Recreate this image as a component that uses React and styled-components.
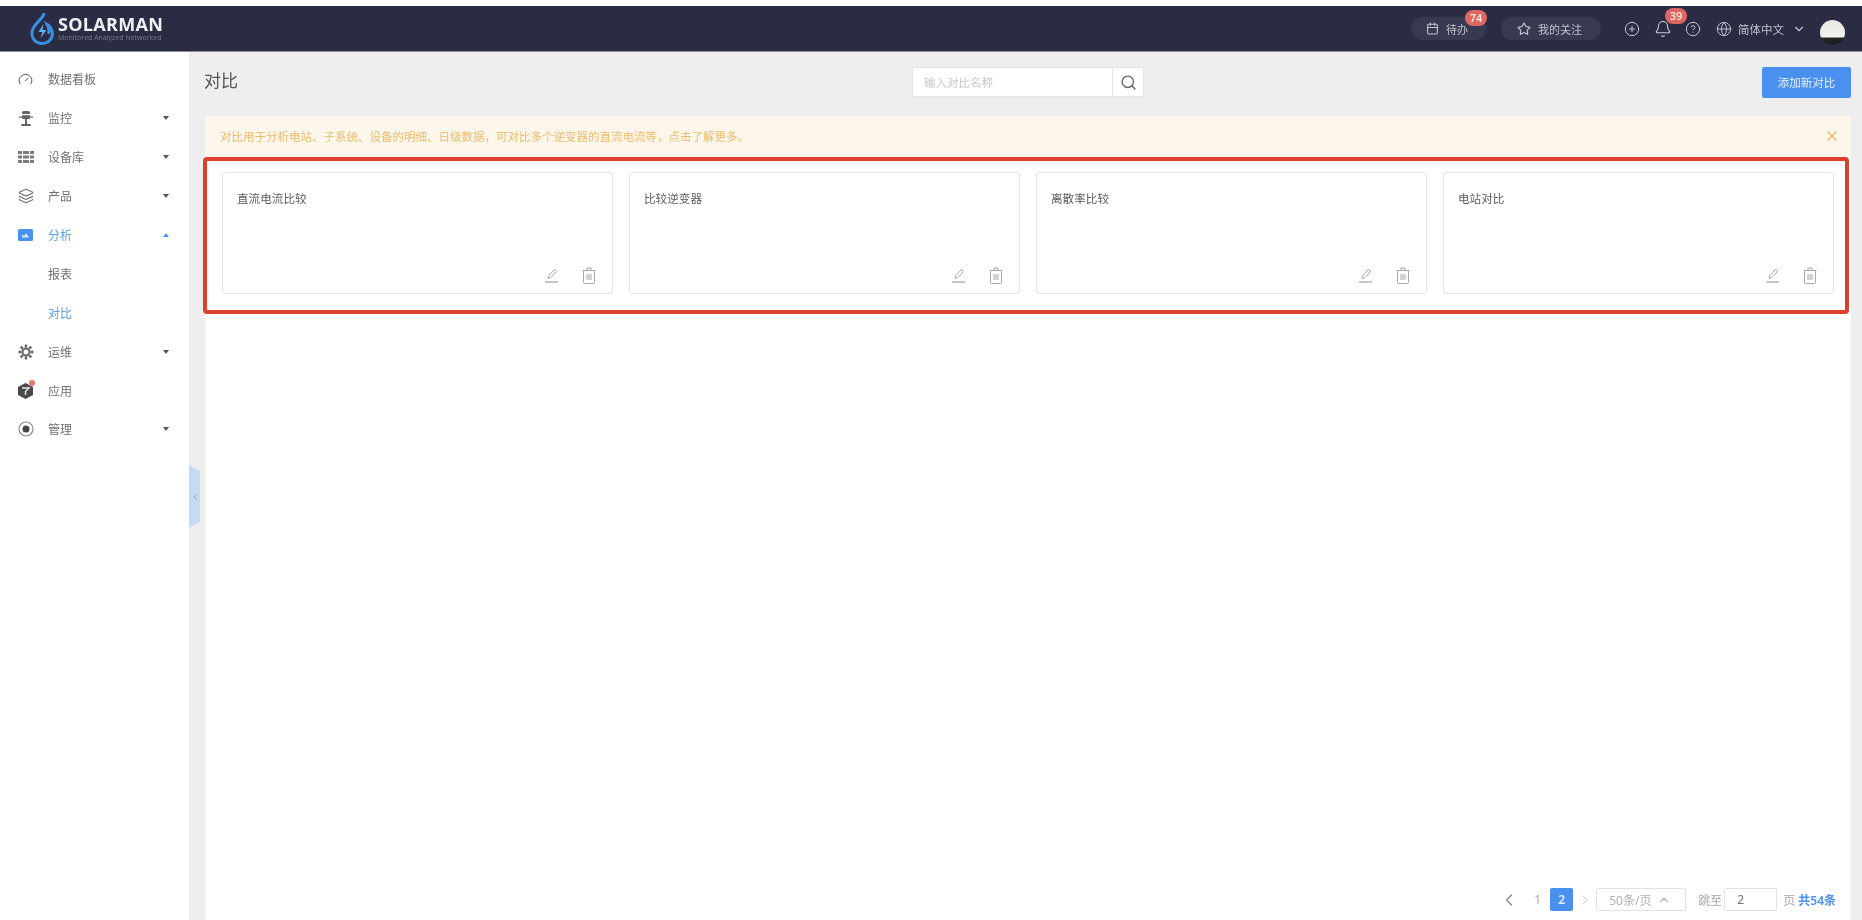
import React from 'react'
import styled, { createGlobalStyle } from 'styled-components'
import {
  Calendar, Star, CirclePlus, Bell, CircleHelp, Globe, ChevronDown, ChevronUp,
  ChevronLeft, ChevronRight, Search, X, Gauge, Layers,
} from 'lucide-react'

const GlobalStyle = createGlobalStyle`
  html, body { margin: 0; padding: 0; background: #fff; }
  body { font-family: "Noto Sans", "Noto Sans CJK SC", sans-serif; font-size: 12px; color: #666; }
  * { box-sizing: border-box; }
`

const Page = styled.div`
  width: 1862px;
  height: 920px;
  padding-top: 6px;
  display: flex;
  flex-direction: column;
  overflow: hidden;
  position: relative;
  filter: blur(0.45px);
`

/* header */
const Header = styled.header`
  height: 46px;
  flex: none;
  background: #2a2c44;
  border-bottom: 1px solid #8b8d99;
  display: flex;
  align-items: center;
  padding: 0 17px 0 30px;
  color: #c9cad2;
`
const Logo = styled.div`
  display: flex;
  align-items: center;
  gap: 4px;
`
const LogoText = styled.div`
  display: flex;
  flex-direction: column;
  color: #eef0f4;
`
const LogoName = styled.span`
  font-family: "Open Sans", sans-serif;
  font-weight: 700;
  font-size: 18px;
  line-height: 19px;
  letter-spacing: 0.3px;
`
const LogoSub = styled.span`
  font-family: "Open Sans", sans-serif;
  font-size: 7px;
  line-height: 8px;
  color: #777a8e;
  white-space: nowrap;
`
const HeaderRight = styled.div`
  margin-left: auto;
  display: flex;
  align-items: center;
`
const Pill = styled.div`
  position: relative;
  height: 23px;
  width: ${p => p.$w}px;
  margin-right: ${p => p.$mr}px;
  border-radius: 12px;
  background: #383a52;
  display: flex;
  align-items: center;
  justify-content: center;
  gap: 7px;
  padding-right: 3px;
  font-size: 11px;
  color: #c2c3cc;
`
const Badge = styled.span`
  position: absolute;
  top: ${p => p.$top}px;
  left: ${p => p.$left}px;
  width: 22px;
  height: 16px;
  border-radius: 8px;
  background: #e0675f;
  color: #f6e3e0;
  font-size: 11px;
  font-weight: 600;
  line-height: 16px;
  text-align: center;
`
const HeadIcon = styled.span`
  position: relative;
  display: flex;
  align-items: center;
  margin-right: ${p => p.$mr}px;
`
const Lang = styled.div`
  display: flex;
  align-items: center;
  gap: 6px;
  font-size: 11.5px;
  color: #c2c3cc;
  margin-right: 14px;
`
const Avatar = styled.div`
  width: 25px;
  height: 25px;
  margin-top: 7px;
  border-radius: 50%;
  background: linear-gradient(180deg, #e6e6de 0%, #f4f4ee 68%, #23261e 72%, #1a1c22 100%);
`

/* body */
const Body = styled.div`
  flex: 1;
  display: flex;
  min-height: 0;
  background: #eeeeef;
`
const Sidebar = styled.nav`
  width: 189px;
  flex: none;
  background: #fff;
  padding-top: 8px;
`
const MenuRow = styled.div`
  height: 38.9px;
  display: flex;
  align-items: center;
  padding-left: 17px;
  color: ${p => (p.$active ? '#5b9ee8' : '#707070')};
`
const MenuIcon = styled.span`
  position: relative;
  width: 17px;
  height: 17px;
  margin-right: 14px;
  display: flex;
  align-items: center;
  justify-content: center;
  color: ${p => (p.$active ? '#4a90ee' : '#555')};
`
const MenuDot = styled.i`
  position: absolute;
  top: -2px;
  right: -1px;
  width: 6px;
  height: 6px;
  border-radius: 50%;
  background: #e9786f;
`
const SubRow = styled(MenuRow)`
  padding-left: 48px;
`
const Caret = styled.i`
  margin-left: auto;
  margin-right: 20px;
  width: 0;
  height: 0;
  border-left: 3.5px solid transparent;
  border-right: 3.5px solid transparent;
  ${p => (p.$up
    ? `border-bottom: 4px solid ${p.$color || '#555'};`
    : `border-top: 4px solid ${p.$color || '#555'};`)}
`
const Collapse = styled.div`
  position: absolute;
  left: 189px;
  top: 465px;
  width: 11px;
  height: 63px;
  background: #c6dbf3;
  clip-path: polygon(0 0, 100% 10%, 100% 90%, 0 100%);
  display: flex;
  align-items: center;
  justify-content: center;
  color: #6ea2dc;
`

/* main */
const Main = styled.main`
  flex: 1;
  min-width: 0;
  display: flex;
  flex-direction: column;
  padding: 0 11px 0 16px;
`
const TopBar = styled.div`
  height: 64px;
  flex: none;
  display: flex;
  align-items: center;
  position: relative;
  padding-bottom: 4px;
`
const Title = styled.h1`
  margin: 0 0 6px -1px;
  font-size: 17px;
  font-weight: 400;
  color: #555;
  width: 708px;
`
const SearchBox = styled.div`
  width: 232px;
  height: 30px;
  background: #fff;
  border: 1px solid #e6e6e6;
  display: flex;
  align-items: center;
  color: #c8c8c8;
  font-size: 11.5px;
`
const SearchText = styled.span`
  flex: 1;
  padding-left: 11px;
`
const SearchBtn = styled.span`
  width: 31px;
  height: 100%;
  border-left: 1px solid #e6e6e6;
  display: flex;
  align-items: center;
  justify-content: center;
  color: #666;
`
const AddBtn = styled.button`
  margin-left: auto;
  width: 89px;
  height: 31px;
  border: 0;
  border-radius: 2px;
  background: #4a90ee;
  color: #e8f1fd;
  font: inherit;
  font-size: 11.5px;
`
const Panel = styled.section`
  flex: 1;
  min-height: 0;
  background: #fff;
  display: flex;
  flex-direction: column;
`
const Notice = styled.div`
  height: 41px;
  flex: none;
  background: #fdf6ea;
  display: flex;
  align-items: center;
  justify-content: space-between;
  padding: 0 11px 2px 15px;
  font-size: 11.5px;
  color: #efbb6c;
`
const Highlight = styled.div`
  margin: 0 2px 0 -2px;
  border: 4px solid #dc3f2c;
  border-radius: 4px;
  padding: 11px 11px 16px 15px;
  display: grid;
  grid-template-columns: repeat(4, 1fr);
  gap: 16px;
`
const Card = styled.div`
  height: 122px;
  background: #fff;
  border: 1px solid #e4e4e4;
  border-radius: 3px;
  padding: 17px 16px 9px 14px;
  display: flex;
  flex-direction: column;
  justify-content: space-between;
`
const CardTitle = styled.div`
  color: #5c5c5c;
  font-size: 11.6px;
  line-height: 18px;
`
const CardActions = styled.div`
  display: flex;
  justify-content: flex-end;
  align-items: center;
  gap: 23px;
`
const Pager = styled.div`
  margin-top: auto;
  height: 23px;
  margin-bottom: 9px;
  padding-right: 15px;
  display: flex;
  align-items: center;
  justify-content: flex-end;
  color: #a8a8a8;
`
const PageNum = styled.span`
  width: 23px;
  height: 23px;
  margin: ${p => p.$m || '0'};
  border-radius: 2px;
  display: flex;
  align-items: center;
  justify-content: center;
  background: ${p => (p.$on ? '#4a90ee' : 'transparent')};
  color: ${p => (p.$on ? '#e8f1fd' : '#a8a8a8')};
  font-weight: ${p => (p.$on ? 600 : 400)};
`
const PageSelect = styled.div`
  width: 90px;
  height: 23px;
  margin: 0 12px 0 3px;
  border: 1px solid #e2e2e2;
  border-radius: 2px;
  display: flex;
  align-items: center;
  justify-content: space-between;
  padding: 0 14px 0 12px;
  color: #b0b0b0;
`
const PageInput = styled.div`
  width: 53px;
  height: 23px;
  margin: 0 6px 0 2px;
  border: 1px solid #e2e2e2;
  border-radius: 2px;
  padding-left: 12px;
  line-height: 21px;
  color: #777;
`
const Total = styled.strong`
  margin-left: 3px;
  color: #4a90ee;
  font-weight: 600;
`

const LogoMark = () => (
  <svg width="24" height="32" viewBox="0 0 24 32" fill="none">
    <path d="M14 1C12 7 3 11 2 19c-.8 6.500 4 11.500 10 11.500S22.800 26 22.300 20c-.3-4-2.600-7-5-8.500 1.500 3 2 5 1.500 8" stroke="#3a8fe0" strokeWidth="3" strokeLinecap="round" />
    <path d="M13.500 11l-5 8h4l-2 6 6-8h-4l1-6z" fill="#5fb4ee" />
  </svg>
)

const MonitorIcon = () => (
  <svg width="16" height="17" viewBox="0 0 16 17" fill="#666">
    <rect x="4" y="1" width="8" height="8" rx="1.500" />
    <rect x="1" y="4" width="14" height="1.200" fill="#fff" />
    <rect x="1" y="6.500" width="14" height="1.200" />
    <rect x="7" y="9" width="2" height="5" />
    <rect x="3" y="14" width="10" height="2" rx="1" />
  </svg>
)

const TableIcon = () => (
  <svg width="16" height="14" viewBox="0 0 16 14" fill="#7a7a7a">
    <rect x="0" y="1" width="4" height="3" />
    <rect x="5" y="1" width="6" height="3" />
    <rect x="12" y="1" width="4" height="3" />
    <rect x="0" y="5.500" width="4" height="3" />
    <rect x="5" y="5.500" width="6" height="3" />
    <rect x="12" y="5.500" width="4" height="3" />
    <rect x="0" y="10" width="4" height="3" />
    <rect x="5" y="10" width="6" height="3" />
    <rect x="12" y="10" width="4" height="3" />
  </svg>
)

const ChartIcon = () => (
  <svg width="15" height="12" viewBox="0 0 15 12">
    <rect width="15" height="12" rx="1.500" fill="#4a90ee" />
    <path d="M4 8.500V5.500l2 1.500 2-3 3 4.500z" fill="#d4e5fb" />
  </svg>
)

const GearIcon = () => (
  <svg width="16" height="16" viewBox="0 0 16 16" fill="none" stroke="#666">
    <circle cx="8" cy="8" r="3.500" strokeWidth="2" />
    <path d="M8 .5v3M8 12.500v3M.5 8h3M12.500 8h3M2.700 2.700l2 2M11.300 11.300l2 2M13.300 2.700l-2 2M4.700 11.300l-2 2" strokeWidth="2.400" />
  </svg>
)

const CubeIcon = () => (
  <svg width="15" height="16" viewBox="0 0 15 16">
    <path d="M7.500 0L15 4v8l-7.500 4L0 12V4z" fill="#4a4a4a" />
    <path d="M4 5h7L7.500 8.500V12" stroke="#eee" strokeWidth="1.400" fill="none" />
  </svg>
)

const TargetIcon = () => (
  <svg width="16" height="16" viewBox="0 0 16 16" fill="none">
    <circle cx="8" cy="8" r="7" stroke="#888" strokeWidth="1.200" />
    <circle cx="8" cy="8" r="3.500" fill="#444" />
  </svg>
)

const EditIcon = () => (
  <svg width="15" height="15" viewBox="0 0 15 15" fill="none" stroke="#a9a9a9" strokeWidth="1">
    <path d="M4 10.500l.8-3L10.500 1.500l2 2-5.700 6z" />
    <path d="M1 14h13" strokeWidth="1.300" />
  </svg>
)

const TrashIcon = () => (
  <svg width="14" height="17" viewBox="0 0 14 17" fill="none" stroke="#a9a9a9" strokeWidth="1">
    <path d="M.5 3.500h13M5 3.500V1h4v2.500" />
    <rect x="1.500" y="3.500" width="11" height="13" rx="1" />
    <path d="M5 7v6M7 7v6M9 7v6" />
  </svg>
)

const menu = [
  { label: '数据看板', icon: <Gauge size={15} strokeWidth={1.600} /> },
  { label: '监控', icon: <MonitorIcon />, caret: true },
  { label: '设备库', icon: <TableIcon />, caret: true },
  { label: '产品', icon: <Layers size={16} strokeWidth={1.800} color="#777" />, caret: true },
  { label: '分析', icon: <ChartIcon />, caret: true, open: true },
  { label: '报表', sub: true },
  { label: '对比', sub: true, active: true },
  { label: '运维', icon: <GearIcon />, caret: true },
  { label: '应用', icon: <CubeIcon />, dot: true },
  { label: '管理', icon: <TargetIcon />, caret: true },
]

const cards = ['直流电流比较', '比较逆变器', '离散率比较', '电站对比']

export default function App() {
  return (
    <Page>
      <GlobalStyle />
      <Header>
        <Logo>
          <LogoMark />
          <LogoText>
            <LogoName>SOLARMAN</LogoName>
            <LogoSub>Monitored Analyzed Networked</LogoSub>
          </LogoText>
        </Logo>
        <HeaderRight>
          <Pill $w={75} $mr={15}>
            <Calendar size={13} />
            待办
            <Badge $top={-7} $left={54}>74</Badge>
          </Pill>
          <Pill $w={100} $mr={23}>
            <Star size={14} />
            我的关注
          </Pill>
          <HeadIcon $mr={14}><CirclePlus size={16} strokeWidth={1.500} /></HeadIcon>
          <HeadIcon $mr={13}>
            <Bell size={18} strokeWidth={1.500} />
            <Badge $top={-12} $left={11}>39</Badge>
          </HeadIcon>
          <HeadIcon $mr={15}><CircleHelp size={16} strokeWidth={1.500} /></HeadIcon>
          <Lang>
            <Globe size={16} strokeWidth={1.500} />
            简体中文
            <ChevronDown size={14} style={{ marginLeft: 2 }} />
          </Lang>
          <Avatar />
        </HeaderRight>
      </Header>
      <Body>
        <Sidebar>
          {menu.map(item => {
            if (item.sub) {
              return <SubRow key={item.label} $active={item.active}>{item.label}</SubRow>
            }
            return (
              <MenuRow key={item.label} $active={item.open}>
                <MenuIcon $active={item.open}>
                  {item.icon}
                  {item.dot && <MenuDot />}
                </MenuIcon>
                {item.label}
                {item.caret && <Caret $up={item.open} $color={item.open ? '#4a90ee' : undefined} />}
              </MenuRow>
            )
          })}
        </Sidebar>
        <Collapse><ChevronLeft size={10} /></Collapse>
        <Main>
          <TopBar>
            <Title>对比</Title>
            <SearchBox>
              <SearchText>输入对比名称</SearchText>
              <SearchBtn><Search size={17} /></SearchBtn>
            </SearchBox>
            <AddBtn>添加新对比</AddBtn>
          </TopBar>
          <Panel>
            <Notice>
              对比用于分析电站、子系统、设备的明细、日级数据，可对比多个逆变器的直流电流等，点击了解更多。
              <X size={16} />
            </Notice>
            <Highlight>
              {cards.map(name => (
                <Card key={name}>
                  <CardTitle>{name}</CardTitle>
                  <CardActions>
                    <EditIcon />
                    <TrashIcon />
                  </CardActions>
                </Card>
              ))}
            </Highlight>
            <Pager>
              <ChevronLeft size={20} strokeWidth={1.500} color="#888" />
              <PageNum $m="0 0 0 7px">1</PageNum>
              <PageNum $on $m="0 0 0 1px">2</PageNum>
              <ChevronRight size={16} strokeWidth={1.500} color="#ccc" style={{ margin: '0 0 0 4px' }} />
              <PageSelect>
                50条/页
                <ChevronUp size={14} />
              </PageSelect>
              跳至
              <PageInput>2</PageInput>
              页
              <Total>共54条</Total>
            </Pager>
          </Panel>
        </Main>
      </Body>
    </Page>
  )
}
